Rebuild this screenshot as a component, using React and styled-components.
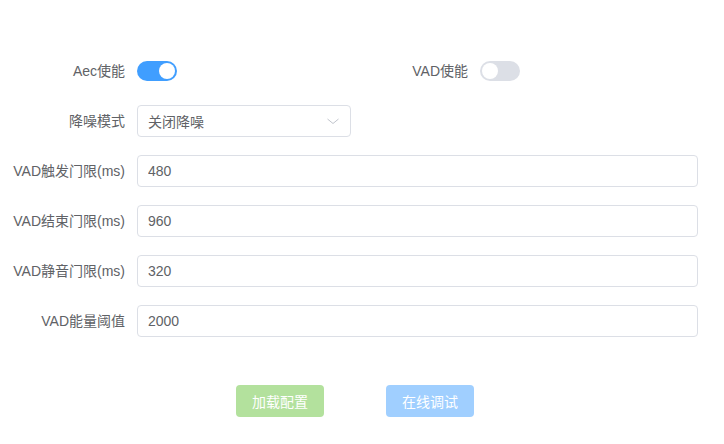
import React, { useState } from "react";
import styled, { createGlobalStyle } from "styled-components";

const GlobalStyle = createGlobalStyle`
  body {
    margin: 0;
    background: #fff;
    font-family: "Liberation Sans", "Noto Sans CJK SC", sans-serif;
  }
`;

const fields = [
  { label: "VAD触发门限(ms)", value: "480" },
  { label: "VAD结束门限(ms)", value: "960" },
  { label: "VAD静音门限(ms)", value: "320" },
  { label: "VAD能量阈值", value: "2000" },
];

function App() {
  const [aec, setAec] = useState(true);
  const [vad, setVad] = useState(false);

  return (
    <Page>
      <GlobalStyle />
      <Form>
        <SwitchRow>
          <Item>
            <Label>Aec使能</Label>
            <Switch $on={aec} onClick={() => setAec(!aec)} />
          </Item>
          <Item>
            <Label>VAD使能</Label>
            <Switch $on={vad} onClick={() => setVad(!vad)} />
          </Item>
        </SwitchRow>
        <Item>
          <Label>降噪模式</Label>
          <Select>
            <span>关闭降噪</span>
            <svg width="12" height="12" viewBox="0 0 12 12">
              <path
                d="M0.5 4 L6 8.5 L11.5 4"
                fill="none"
                stroke="#c0c4cc"
                strokeWidth="1"
              />
            </svg>
          </Select>
        </Item>
        {fields.map((f) => (
          <Item key={f.label}>
            <Label>{f.label}</Label>
            <Input defaultValue={f.value} />
          </Item>
        ))}
      </Form>
      <Actions>
        <Button $color="#b3e19d">加载配置</Button>
        <Button $color="#a0cfff">在线调试</Button>
      </Actions>
    </Page>
  );
}

export default App;

const Page = styled.div`
  width: 724px;
  padding-top: 55px;
`;

const Form = styled.div`
  width: 698px;
  display: flex;
  flex-direction: column;
  gap: 18px;
`;

const SwitchRow = styled.div`
  display: grid;
  grid-template-columns: 343px 1fr;
`;

const Item = styled.div`
  display: flex;
  align-items: center;
  height: 32px;
`;

const Label = styled.label`
  width: 137px;
  flex: none;
  box-sizing: border-box;
  padding-right: 12px;
  text-align: right;
  font-size: 14px;
  line-height: 32px;
  color: #606266;
  white-space: nowrap;
`;

const Switch = styled.span`
  position: relative;
  width: 40px;
  height: 20px;
  border-radius: 10px;
  background: ${(p) => (p.$on ? "#409eff" : "#dcdfe6")};
  cursor: pointer;

  &::after {
    content: "";
    position: absolute;
    top: 2px;
    left: ${(p) => (p.$on ? "22px" : "2px")};
    width: 16px;
    height: 16px;
    border-radius: 50%;
    background: #fff;
  }
`;

const Select = styled.div`
  width: 214px;
  height: 32px;
  box-sizing: border-box;
  border: 1px solid #dcdfe6;
  border-radius: 4px;
  padding: 0 11px 0 10px;
  display: flex;
  align-items: center;
  justify-content: space-between;
  font-size: 14px;
  color: #606266;
`;

const Input = styled.input`
  flex: 1;
  height: 32px;
  box-sizing: border-box;
  border: 1px solid #dcdfe6;
  border-radius: 4px;
  padding: 0 10px;
  font-family: inherit;
  font-size: 14px;
  color: #606266;
  outline: none;
`;

const Actions = styled.div`
  display: flex;
  gap: 62px;
  padding-left: 236px;
  margin-top: 48px;
`;

const Button = styled.button`
  width: 88px;
  height: 32px;
  border: none;
  border-radius: 4px;
  background: ${(p) => p.$color};
  color: #fff;
  font-family: inherit;
  font-size: 14px;
  padding: 0;
  cursor: not-allowed;
`;
